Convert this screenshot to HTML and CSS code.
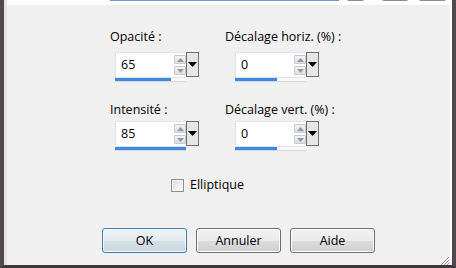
FILE: index.html
```html
<!DOCTYPE html>
<html>
  <head>
    <meta charset="utf-8">
    <link rel="stylesheet" href="styles.css">
  </head>
  <body>
    <div class="frame">
      <div class="pane">
        <div class="topstrip">
          <div class="combo"><div class="combo-btn"></div></div>
          <div class="topbtn w18"></div>
          <div class="topbtn w27"></div>
          <div class="topbtn w28"></div>
        </div>

        <div class="fields">
          <div class="field col1">
            <div class="label">Opacité :</div>
            <div class="spin">
              <div class="spin-row">
                <div class="spin-edit">65</div>
                <div class="arrows">
                  <div class="arrow up"><svg width="9" height="6" viewBox="0 0 9 6"><polygon points="1,5 8,5 4.5,1" fill="#8a99ad"/></svg></div>
                  <div class="arrow down"><svg width="9" height="6" viewBox="0 0 9 6"><polygon points="1,1 8,1 4.5,5" fill="#8a99ad"/></svg></div>
                </div>
                <div class="drop"><svg width="9" height="6" viewBox="0 0 9 6"><polygon points="0,0 9,0 4.5,5" fill="#000"/></svg></div>
              </div>
              <div class="track"><div class="fill" style="width: 56px"></div></div>
            </div>
          </div>

          <div class="field col2">
            <div class="label">Décalage horiz. (%) :</div>
            <div class="spin">
              <div class="spin-row">
                <div class="spin-edit">0</div>
                <div class="arrows">
                  <div class="arrow up"><svg width="9" height="6" viewBox="0 0 9 6"><polygon points="1,5 8,5 4.5,1" fill="#8a99ad"/></svg></div>
                  <div class="arrow down"><svg width="9" height="6" viewBox="0 0 9 6"><polygon points="1,1 8,1 4.5,5" fill="#8a99ad"/></svg></div>
                </div>
                <div class="drop"><svg width="9" height="6" viewBox="0 0 9 6"><polygon points="0,0 9,0 4.5,5" fill="#000"/></svg></div>
              </div>
              <div class="track"><div class="fill" style="width: 42px"></div></div>
            </div>
          </div>

          <div class="field col1 row2">
            <div class="label">Intensité :</div>
            <div class="spin">
              <div class="spin-row">
                <div class="spin-edit">85</div>
                <div class="arrows">
                  <div class="arrow up"><svg width="9" height="6" viewBox="0 0 9 6"><polygon points="1,5 8,5 4.5,1" fill="#8a99ad"/></svg></div>
                  <div class="arrow down"><svg width="9" height="6" viewBox="0 0 9 6"><polygon points="1,1 8,1 4.5,5" fill="#8a99ad"/></svg></div>
                </div>
                <div class="drop"><svg width="9" height="6" viewBox="0 0 9 6"><polygon points="0,0 9,0 4.5,5" fill="#000"/></svg></div>
              </div>
              <div class="track"><div class="fill" style="width: 71px"></div></div>
            </div>
          </div>

          <div class="field col2 row2">
            <div class="label">Décalage vert. (%) :</div>
            <div class="spin">
              <div class="spin-row">
                <div class="spin-edit">0</div>
                <div class="arrows">
                  <div class="arrow up"><svg width="9" height="6" viewBox="0 0 9 6"><polygon points="1,5 8,5 4.5,1" fill="#8a99ad"/></svg></div>
                  <div class="arrow down"><svg width="9" height="6" viewBox="0 0 9 6"><polygon points="1,1 8,1 4.5,5" fill="#8a99ad"/></svg></div>
                </div>
                <div class="drop"><svg width="9" height="6" viewBox="0 0 9 6"><polygon points="0,0 9,0 4.5,5" fill="#000"/></svg></div>
              </div>
              <div class="track"><div class="fill" style="width: 42px"></div></div>
            </div>
          </div>
        </div>

        <label class="check">
          <span class="box"></span>
          <span>Elliptique</span>
        </label>

        <div class="buttons">
          <button class="btn default">OK</button>
          <button class="btn">Annuler</button>
          <button class="btn">Aide</button>
        </div>

        <div class="grip"><svg width="12" height="12" viewBox="0 0 12 12"><path d="M11 3 L3 11 M11 6 L6 11 M11 9 L9 11" stroke="#9a9a9a" stroke-width="1"/></svg></div>
      </div>
    </div>
  </body>
</html>
```

FILE: styles.css
```css
html, body {
    margin: 0;
    padding: 0;
}
body {
    width: 456px;
    height: 268px;
    overflow: hidden;
    font-family: "Open Sans", "Noto Sans", sans-serif;
    font-size: 12.5px;
    color: #000;
}

.frame {
    height: 268px;
    box-sizing: border-box;
    border-left: 4px solid #514950;
    border-right: 4px solid #514950;
    border-bottom: 3px solid #3e383d;
}
.pane {
    position: relative;
    height: 100%;
    box-sizing: border-box;
    background: #f0f0f0;
    border-left: 3px solid #e4e4e4;
    border-right: 2px solid #fbfbfb;
}

/* bits of the control row above, cut off by the window */
.topstrip {
    height: 6px;
    background: #fff;
    overflow: hidden;
    display: flex;
    align-items: flex-end;
    padding-left: 103px;
    padding-bottom: 4px;
    box-sizing: border-box;
    border-bottom: 1px solid #ececec;
}
.combo {
    width: 227px;
    height: 20px;
    border: 1px solid #6f9ec4;
    border-top: none;
    display: flex;
    justify-content: flex-end;
}
.combo-btn { width: 13px; background: #4a7fb8; }
.topbtn {
    height: 20px;
    border: 1px solid #8c8c8c;
    border-radius: 0 0 3px 3px;
    background: #f2f2f2;
}
.w18 { width: 17px; margin-left: 7px; }
.w27 { width: 26px; margin-left: 16px; }
.w28 { width: 27px; margin-left: 9px; }

.fields {
    display: grid;
    grid-template-columns: 115px 120px;
    padding: 23px 0 0 103px;
    row-gap: 20px;
}
.label { line-height: 16px; }
.spin { margin: 7px 0 0 5px; width: 85px; }
.col2 .spin { margin-left: 10px; }
.row2 .spin { margin-top: 3px; }

.spin-row { display: flex; height: 26px; }
.spin-edit {
    width: 53px;
    background: #fff;
    border: 1px solid #e2e3ea;
    border-right: none;
    padding-left: 5px;
    line-height: 24px;
}
.arrows {
    width: 12px;
    display: flex;
    flex-direction: column;
    gap: 2px;
    padding: 2px 0;
    background: #fff;
    border-top: 1px solid #e2e3ea;
    border-bottom: 1px solid #e2e3ea;
    box-sizing: border-box;
}
.arrow {
    flex: 1;
    display: flex;
    align-items: center;
    justify-content: center;
    background: linear-gradient(#f4f4f4, #dedede);
    border: 1px solid #c9c9c9;
    border-radius: 1px;
}
.drop {
    width: 11px;
    height: 23px;
    border: 1px solid #707070;
    background: #e6e6e6;
    display: flex;
    align-items: center;
    justify-content: center;
}
.track {
    height: 3px;
    width: 71px;
    background: #f8f8f8;
    border-bottom: 1px solid #d8d8d8;
}
.fill { height: 3px; background: #3d8be0; }

.check {
    display: flex;
    align-items: center;
    gap: 6px;
    margin: 26px 0 0 164px;
    line-height: 16px;
}
.box {
    width: 11px;
    height: 11px;
    border: 1px solid #8e8f8f;
    background: linear-gradient(135deg, #dcdcdc, #fbfbfb);
    box-shadow: inset 0 0 0 1px #f4f4f4;
}

.buttons {
    display: flex;
    gap: 9px;
    margin: 35px 0 0 95px;
}
.btn {
    width: 85px;
    height: 25px;
    margin: 0;
    padding: 0;
    font-family: inherit;
    font-size: 12.5px;
    color: #000;
    border: 1px solid #707070;
    border-radius: 3px;
    background: linear-gradient(#f2f2f2 0%, #ebebeb 50%, #dddddd 51%, #cfcfcf 100%);
    box-shadow: inset 0 0 0 1px #fcfcfc;
}
.btn.default {
    border-color: #3c7fb1;
    box-shadow: inset 0 0 0 1px #f3f8fb;
    background: linear-gradient(#eef3f6 0%, #e3ebf0 50%, #d6e0e7 51%, #cbd6de 100%);
}

.grip {
    position: absolute;
    right: 0;
    bottom: 0;
    width: 12px;
    height: 12px;
}
```
